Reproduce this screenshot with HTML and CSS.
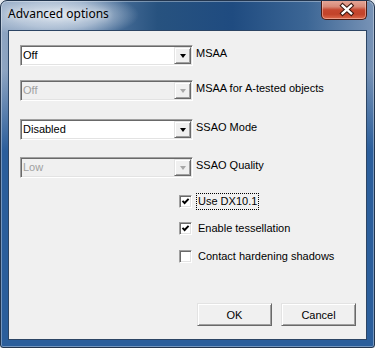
FILE: index.html
```html
<!DOCTYPE html>
<html lang="en">
<head>
  <meta charset="UTF-8">
  <title>Advanced options</title>
  <link rel="stylesheet" href="styles.css">
</head>
<body>

  <div class="window">
    <!-- Title bar -->
    <div class="titlebar">
      <span class="title">Advanced options</span>
      <button class="close-btn" aria-label="Close">
        <svg width="46" height="19" viewBox="0 0 46 19">
          <path d="M21.5 5.5 L30.5 13.5 M30.5 5.5 L21.5 13.5" stroke="#3b1710" stroke-width="4.6" stroke-linecap="square" fill="none"/>
          <path d="M21.5 5.5 L30.5 13.5 M30.5 5.5 L21.5 13.5" stroke="#ffffff" stroke-width="2.4" stroke-linecap="square" fill="none"/>
        </svg>
      </button>
    </div>

    <!-- Dialog body -->
    <div class="client">
      <div class="option-row">
        <div class="combo">
          <span class="combo-value">Off</span>
          <span class="combo-arrow"></span>
        </div>
        <span class="option-label">MSAA</span>
      </div>

      <div class="option-row row-2">
        <div class="combo disabled">
          <span class="combo-value">Off</span>
          <span class="combo-arrow"></span>
        </div>
        <span class="option-label">MSAA for A-tested objects</span>
      </div>

      <div class="option-row row-3">
        <div class="combo">
          <span class="combo-value">Disabled</span>
          <span class="combo-arrow"></span>
        </div>
        <span class="option-label">SSAO Mode</span>
      </div>

      <div class="option-row row-4">
        <div class="combo disabled">
          <span class="combo-value">Low</span>
          <span class="combo-arrow"></span>
        </div>
        <span class="option-label">SSAO Quality</span>
      </div>

      <div class="check-row first">
        <span class="checkbox">
          <svg width="9" height="9" viewBox="0 0 9 9"><path d="M1.5 3.8 L3.6 6 L7.6 1.8" stroke="#000" stroke-width="1.9" fill="none"/></svg>
        </span>
        <span class="check-label focused">Use DX10.1</span>
      </div>

      <div class="check-row">
        <span class="checkbox">
          <svg width="9" height="9" viewBox="0 0 9 9"><path d="M1.5 3.8 L3.6 6 L7.6 1.8" stroke="#000" stroke-width="1.9" fill="none"/></svg>
        </span>
        <span class="check-label">Enable tessellation</span>
      </div>

      <div class="check-row last">
        <span class="checkbox"></span>
        <span class="check-label">Contact hardening shadows</span>
      </div>

      <div class="button-row">
        <button class="btn">OK</button>
        <button class="btn">Cancel</button>
      </div>
    </div>
  </div>

</body>
</html>
```

FILE: styles.css
```css
* {
  margin: 0;
  padding: 0;
  box-sizing: border-box;
}

body {
  background-color: #e6eaef;
  font-family: 'Liberation Sans', Arial, sans-serif;
  font-size: 11px;
  color: #000;
}

.window {
  width: 375px;
  height: 348px;
  border: 1px solid #22354e;
  border-radius: 7px 7px 3px 3px;
  box-shadow: inset 0 0 0 1px rgba(255, 255, 255, 0.35);
  background:
    radial-gradient(ellipse 80px 24px at 58px 14px, rgba(226, 233, 241, 0.95), rgba(226, 233, 241, 0.55) 55%, rgba(226, 233, 241, 0) 100%),
    linear-gradient(180deg, rgba(43, 94, 155, 0) 0px, rgba(43, 94, 155, 0) 70px, #2b5e9b 150px),
    linear-gradient(90deg, #8ea5c2 0%, #6283ab 22%, #27527f 42%, #1f4b80 62%, #3c6695 82%, #7893b6 100%);
  display: flex;
  flex-direction: column;
  overflow: hidden;
}

/* title bar */
.titlebar {
  height: 29px;
  display: flex;
  align-items: flex-start;
  justify-content: space-between;
  padding-left: 7px;
  padding-right: 7px;
}

.title {
  font-family: 'Noto Sans', 'Open Sans', sans-serif;
  font-size: 12px;
  line-height: 16px;
  margin-top: 5px;
  color: #000;
  text-shadow: 0 0 6px rgba(255, 255, 255, 0.9);
}

.close-btn {
  width: 46px;
  height: 20px;
  margin-top: -1px;
  border: 1px solid #4a1a12;
  border-top: none;
  border-radius: 0 0 5px 5px;
  background: linear-gradient(180deg, #e6aa9c 0%, #d88a78 35%, #c6472f 52%, #c2432a 75%, #dc6a4c 100%);
  box-shadow: inset 0 0 0 1px rgba(255, 220, 210, 0.45);
  display: flex;
  padding: 0;
}

/* dialog client area */
.client {
  width: 359px;
  height: 310px;
  margin: 0 7px;
  background-color: #f0f0f0;
  border: 1px solid #2c4564;
  padding: 14px 10px 13px 11px;
  display: flex;
  flex-direction: column;
}

.option-row {
  display: flex;
  align-items: flex-start;
  gap: 3px;
}

.row-2 {
  margin-top: 14px;
}

.row-3 {
  margin-top: 18px;
}

.row-4 {
  margin-top: 17px;
}

.combo {
  width: 173px;
  height: 21px;
  background-color: #fff;
  border: 1px solid;
  border-color: #a0a0a0 #fff #fff #a0a0a0;
  box-shadow: inset 1px 1px 0 #696969, inset -1px -1px 0 #e3e3e3;
  padding: 1px;
  display: flex;
}

.combo-value {
  flex: 1;
  line-height: 17px;
  padding-left: 1px;
}

.combo-arrow {
  width: 17px;
  height: 17px;
  background-color: #f0f0f0;
  border: 1px solid;
  border-color: #e3e3e3 #696969 #696969 #e3e3e3;
  box-shadow: inset 1px 1px 0 #fff, inset -1px -1px 0 #a0a0a0;
  display: flex;
  align-items: center;
  justify-content: center;
}

.combo-arrow::after {
  content: "";
  width: 0;
  height: 0;
  margin-top: 1px;
  border-left: 3.5px solid transparent;
  border-right: 3.5px solid transparent;
  border-top: 4px solid #000;
}

.combo.disabled {
  background-color: #f0f0f0;
}

.combo.disabled .combo-value {
  color: #a0a0a0;
}

.combo.disabled .combo-arrow::after {
  border-top-color: #a8a8a8;
}

.option-label {
  line-height: 13px;
  margin-top: 2px;
}

/* check boxes */
.check-row {
  display: flex;
  align-items: center;
  gap: 4px;
  height: 17px;
  margin-left: 159px;
  margin-top: 10px;
}

.check-row.first {
  margin-top: 15px;
}

.check-row.last {
  margin-top: 11px;
}

.checkbox {
  width: 13px;
  height: 13px;
  background-color: #fff;
  border: 1px solid;
  border-color: #a0a0a0 #fff #fff #a0a0a0;
  box-shadow: inset 1px 1px 0 #696969, inset -1px -1px 0 #e3e3e3;
  display: flex;
  align-items: center;
  justify-content: center;
}

.check-label {
  line-height: 15px;
  padding: 0 1px;
  border: 1px solid transparent;
}

.check-label.focused {
  border: 1px dotted #000;
}

/* buttons */
.button-row {
  margin-top: auto;
  display: flex;
  justify-content: flex-end;
  gap: 9px;
}

.btn {
  width: 75px;
  height: 23px;
  font-family: 'Liberation Sans', Arial, sans-serif;
  font-size: 11px;
  color: #000;
  background-color: #f0f0f0;
  border: 1px solid;
  border-color: #e3e3e3 #696969 #696969 #e3e3e3;
  box-shadow: inset 1px 1px 0 #fff, inset -1px -1px 0 #a0a0a0;
}
```
